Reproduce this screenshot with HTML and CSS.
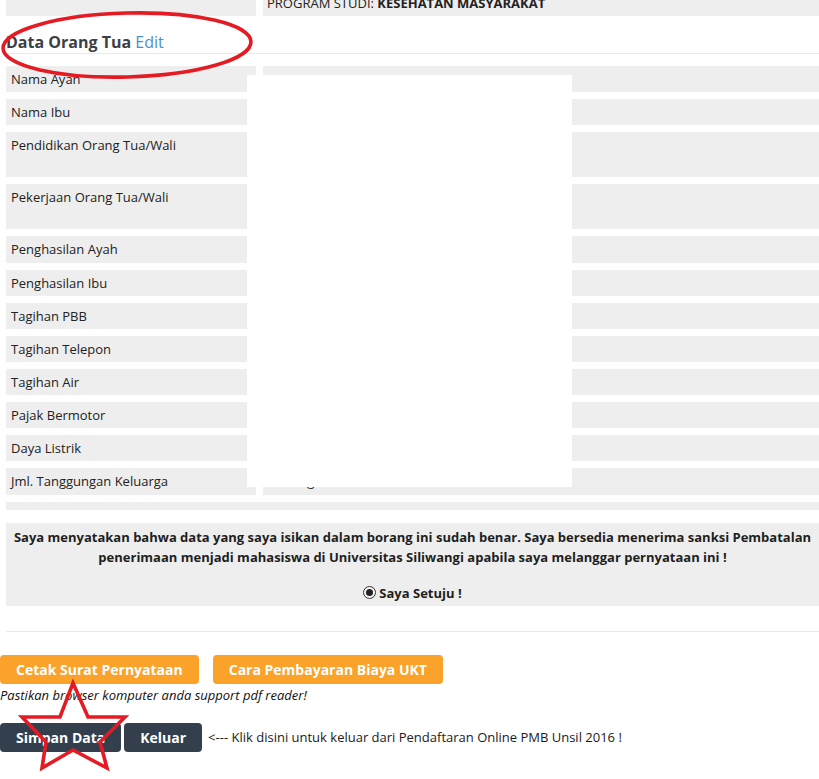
FILE: index.html
```html
<!DOCTYPE html>
<html>
<head>
<meta charset="utf-8">
<link rel="stylesheet" href="styles.css">
</head>
<body>
<div class="page">
  <div class="grid top-grid">
    <div class="cell"></div>
    <div class="cell">PROGRAM STUDI: <b>KESEHATAN MASYARAKAT</b></div>
  </div>

  <h3 class="section-title">Data Orang Tua <a class="edit">Edit</a></h3>

  <div class="grid data-grid">
    <div class="cell">Nama Ayah</div><div class="cell"></div>
    <div class="cell">Nama Ibu</div><div class="cell"></div>
    <div class="cell tall">Pendidikan Orang Tua/Wali</div><div class="cell tall"></div>
    <div class="cell tall">Pekerjaan Orang Tua/Wali</div><div class="cell tall"></div>
    <div class="cell">Penghasilan Ayah</div><div class="cell"></div>
    <div class="cell">Penghasilan Ibu</div><div class="cell"></div>
    <div class="cell">Tagihan PBB</div><div class="cell"></div>
    <div class="cell">Tagihan Telepon</div><div class="cell"></div>
    <div class="cell">Tagihan Air</div><div class="cell"></div>
    <div class="cell">Pajak Bermotor</div><div class="cell"></div>
    <div class="cell">Daya Listrik</div><div class="cell"></div>
    <div class="cell">Jml. Tanggungan Keluarga</div><div class="cell">2 orang</div>
    <div class="cell empty"></div>
  </div>

  <div class="statement">
    <p class="statement-text">Saya menyatakan bahwa data yang saya isikan dalam borang ini sudah benar. Saya bersedia menerima sanksi Pembatalan penerimaan menjadi mahasiswa di Universitas Siliwangi apabila saya melanggar pernyataan ini !</p>
    <div class="agree"><span class="radio"><span class="radio-dot"></span></span>Saya Setuju !</div>
  </div>

  <div class="rule"></div>

  <div class="actions">
    <a class="btn btn-orange">Cetak Surat Pernyataan</a>
    <a class="btn btn-orange">Cara Pembayaran Biaya UKT</a>
  </div>
  <p class="note">Pastikan browser komputer anda support pdf reader!</p>

  <div class="actions actions-dark">
    <a class="btn btn-dark">Simpan Data</a>
    <a class="btn btn-dark">Keluar</a>
    <span class="hint">&lt;--- Klik disini untuk keluar dari Pendaftaran Online PMB Unsil 2016 !</span>
  </div>

  <div class="redact"></div>

  <svg class="mark mark-ellipse" width="270" height="90" viewBox="0 0 270 90">
    <ellipse cx="127" cy="45" rx="124" ry="32" transform="rotate(-1.5 127 45)" fill="none" stroke="#e51b24" stroke-width="3.6"/>
  </svg>

  <svg class="mark mark-star" width="140" height="100" viewBox="0 675 140 100">
    <polygon points="73,683 88,717 125,717 100,742 107,768 73,750 42,768 46,742 22,717 60,717" fill="none" stroke="#e51b24" stroke-width="3.6" stroke-linejoin="miter"/>
  </svg>
</div>
</body>
</html>
```

FILE: styles.css
```css
html, body {
  margin: 0;
  padding: 0;
  background: #ffffff;
}

body {
  font-family: "Open Sans", "Liberation Sans", sans-serif;
  font-size: 13px;
  color: #222;
  overflow: hidden;
}

.page {
  position: relative;
  display: flow-root;
  width: 819px;
  height: 779px;
}

.grid {
  display: grid;
  grid-template-columns: 250px 1fr;
  column-gap: 7px;
  row-gap: 7px;
  padding-left: 6px;
}

.cell {
  background: #eeeeee;
  padding: 4px 5px 4.15px 5px;
  line-height: 18px;
  min-height: 18px;
}

.top-grid {
  margin-top: -10px;
}

.top-grid .cell + .cell {
  padding-left: 4px;
}

.tall {
  height: 36.85px;
}

.empty {
  grid-column: 1 / 3;
  min-height: 0;
  height: 8px;
  padding: 0;
}

.section-title {
  margin: 14px 0 12px 6px;
  padding: 2px 0 1px 0;
  font-size: 16px;
  line-height: 20px;
  font-weight: 700;
  color: #3b4046;
  border-bottom: 1px solid #eaeaea;
}

.edit {
  color: #4a8fcf;
  font-weight: 400;
}

.data-grid .cell + .cell {
  padding-left: 5px;
}

.statement {
  margin: 13px 0 0 6px;
  background: #eeeeee;
  padding: 4px 6px 3px 6px;
  text-align: center;
  font-weight: 700;
  color: #1e1e1e;
}

.statement-text {
  margin: 0;
  line-height: 20px;
}

.agree {
  margin-top: 16px;
  line-height: 20px;
  display: flex;
  justify-content: center;
  align-items: center;
  gap: 3px;
}

.radio {
  width: 11px;
  height: 11px;
  border: 1px solid #333;
  border-radius: 50%;
  background: #f4f4f4;
  display: inline-flex;
  align-items: center;
  justify-content: center;
}

.radio-dot {
  width: 7px;
  height: 7px;
  border-radius: 50%;
  background: #222;
}

.rule {
  margin: 25px 0 0 6px;
  height: 1px;
  background: #eaeaea;
}

.actions {
  margin-top: 23px;
  display: flex;
  align-items: center;
  gap: 14px;
}

.btn {
  display: inline-block;
  height: 29px;
  line-height: 29px;
  padding: 0 16px;
  border-radius: 4px;
  font-weight: 700;
  font-size: 14px;
  color: #ffffff;
  box-sizing: border-box;
}

.btn-orange {
  background: #faa22a;
}

.btn-dark {
  background: #333f4d;
}

.actions-dark {
  margin-top: 19px;
  gap: 3px;
}

.hint {
  margin-left: 3px;
  color: #1a1a1a;
}

.note {
  margin: 2px 0 0 0;
  font-style: italic;
  line-height: 18px;
  color: #111;
}

.redact {
  position: absolute;
  left: 247px;
  top: 75px;
  width: 325px;
  height: 412px;
  background: #ffffff;
}

.mark {
  position: absolute;
  overflow: visible;
  pointer-events: none;
}

.mark-ellipse {
  left: 0;
  top: 0;
}

.mark-star {
  left: 0;
  top: 675px;
}
```
